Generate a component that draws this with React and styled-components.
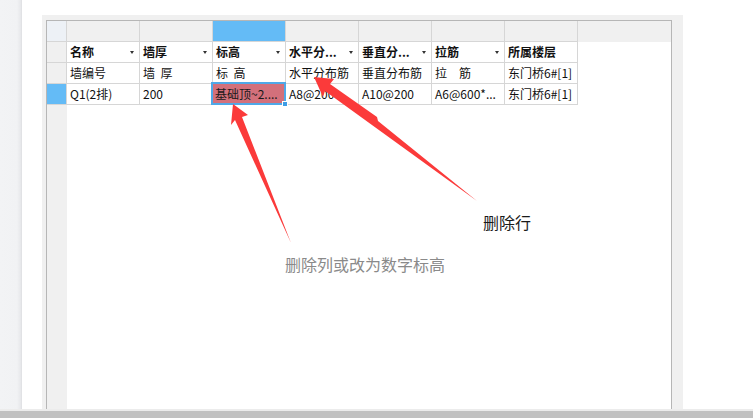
import styled, { createGlobalStyle } from "styled-components";

const GlobalStyle = createGlobalStyle`
  html, body {
    margin: 0;
    padding: 0;
    background: #ffffff;
  }
  body {
    font-family: "Noto Sans CJK SC", "Liberation Sans", sans-serif;
    color: #111;
  }
`;

const Page = styled.div`
  width: 753px;
  height: 418px;
  display: flex;
  flex-direction: column;
  overflow: hidden;
`;

const Workspace = styled.div`
  position: relative;
  height: 409px;
  display: flex;
`;

const SideStrip = styled.div`
  width: 22px;
  background: linear-gradient(to right, #f2f3f5 0, #f1f2f4 17px, #e6e7ea 21px, #dcdde0 22px);
`;

const Gutter = styled.div`
  width: 20px;
`;

const GridFrame = styled.div`
  width: 641px;
  margin-top: 15px;
  padding: 5px 11px 0 4px;
  box-sizing: border-box;
  background: #f0f0f0;
  display: flex;
`;

const GridInner = styled.div`
  flex: 1;
  border: 1px solid #b6b6b6;
  border-bottom: none;
  background: linear-gradient(to right, #f0f0f0 20px, #ffffff 20px);
`;

const Sheet = styled.div`
  display: grid;
  grid-template-columns: 20px repeat(7, 73px) 1fr;
  grid-auto-rows: 21px;
  font-size: 12px;
`;

const Cell = styled.div`
  position: relative;
  box-sizing: border-box;
  display: flex;
  align-items: center;
  justify-content: space-between;
  padding: 0 5px 0 3px;
  white-space: pre;
  line-height: 20px;
  font-weight: ${({ $bold }) => ($bold ? 700 : 400)};
  background: ${({ $bg }) => $bg || "#ffffff"};
  border-right: ${({ $noRight }) => ($noRight ? "none" : "1px solid #d6d6d6")};
  border-bottom: ${({ $noBottom }) => ($noBottom ? "none" : "1px solid #d6d6d6")};
`;

const DropArrow = styled.span`
  width: 0;
  height: 0;
  border-left: 2.5px solid transparent;
  border-right: 2.5px solid transparent;
  border-top: 3px solid #333;
  margin-top: 1px;
`;

const Selection = styled.div`
  position: absolute;
  left: -2px;
  top: -2px;
  right: -1px;
  bottom: -1px;
  border: 2px solid #4fa8e8;
  background: #d3707b;
  padding: 0 2px;
  display: flex;
  align-items: center;
  color: #1a1a1a;
  z-index: 1;
`;

const Handle = styled.span`
  position: absolute;
  right: -4px;
  bottom: -4px;
  width: 4px;
  height: 4px;
  background: #3d9de6;
  border: 1px solid #ffffff;
`;

const StatusBar = styled.div`
  flex: 1;
  border-top: 2px solid #ececec;
  background: #c1c1c1;
`;

const Overlay = styled.svg`
  position: absolute;
  left: 0;
  top: 0;
  pointer-events: none;
  z-index: 2;
`;

const Note = styled.span`
  position: absolute;
  left: ${({ $x }) => $x}px;
  top: ${({ $y }) => $y}px;
  font-size: 16px;
  line-height: 20px;
  color: ${({ $muted }) => ($muted ? "#8a8a8a" : "#1a1a1a")};
  z-index: 2;
`;

const columns = [
  { title: "名称", sub: "墙编号", value: "Q1(2排)", menu: true },
  { title: "墙厚", sub: "墙  厚", value: "200", menu: true },
  { title: "标高", sub: "标  高", value: "基础顶~2....", menu: true, selected: true },
  { title: "水平分...", sub: "水平分布筋", value: "A8@200", menu: true },
  { title: "垂直分...", sub: "垂直分布筋", value: "A10@200", menu: true },
  { title: "拉筋", sub: "拉\u3000筋", value: "A6@600*...", menu: true },
  { title: "所属楼层", sub: "东门桥6#[1]", value: "东门桥6#[1]", menu: false },
];

function GridSheet() {
  return (
    <Sheet>
      <Cell $bg="#edf1f6" />
      {columns.map((c) => (
        <Cell key={"h" + c.title} $bg={c.selected ? "#64bbf6" : "#f0f0f0"} />
      ))}
      <Cell $bg="#f0f0f0" $noRight $noBottom />

      <Cell $bg="#f0f0f0" />
      {columns.map((c) => (
        <Cell key={"t" + c.title} $bold>
          <span>{c.title}</span>
          {c.menu && <DropArrow />}
        </Cell>
      ))}
      <Cell $bg="transparent" $noRight $noBottom />

      <Cell $bg="#f0f0f0" />
      {columns.map((c) => (
        <Cell key={"s" + c.title}>{c.sub}</Cell>
      ))}
      <Cell $bg="transparent" $noRight $noBottom />

      <Cell $bg="#64bbf6" />
      {columns.map((c) => (
        <Cell key={"v" + c.title}>
          {c.selected ? (
            <Selection>
              {c.value}
              <Handle />
            </Selection>
          ) : (
            c.value
          )}
        </Cell>
      ))}
      <Cell $bg="transparent" $noRight $noBottom />
    </Sheet>
  );
}

function Arrows() {
  return (
    <Overlay width="753" height="409" viewBox="0 0 753 409">
      <polygon
        points="233,104 248,115 242,117 291,243 235,120 231,125"
        fill="#fb3a3a"
      />
      <polygon
        points="314,77 334,79 330,84 377,117 378,121 477,201 325,91 323,97"
        fill="#fb3a3a"
      />
    </Overlay>
  );
}

export default function App() {
  return (
    <>
      <GlobalStyle />
      <Page>
        <Workspace>
          <SideStrip />
          <Gutter />
          <GridFrame>
            <GridInner>
              <GridSheet />
            </GridInner>
          </GridFrame>
          <Arrows />
          <Note $x={483} $y={212}>删除行</Note>
          <Note $x={285} $y={254} $muted>
            删除列或改为数字标高
          </Note>
        </Workspace>
        <StatusBar />
      </Page>
    </>
  );
}
